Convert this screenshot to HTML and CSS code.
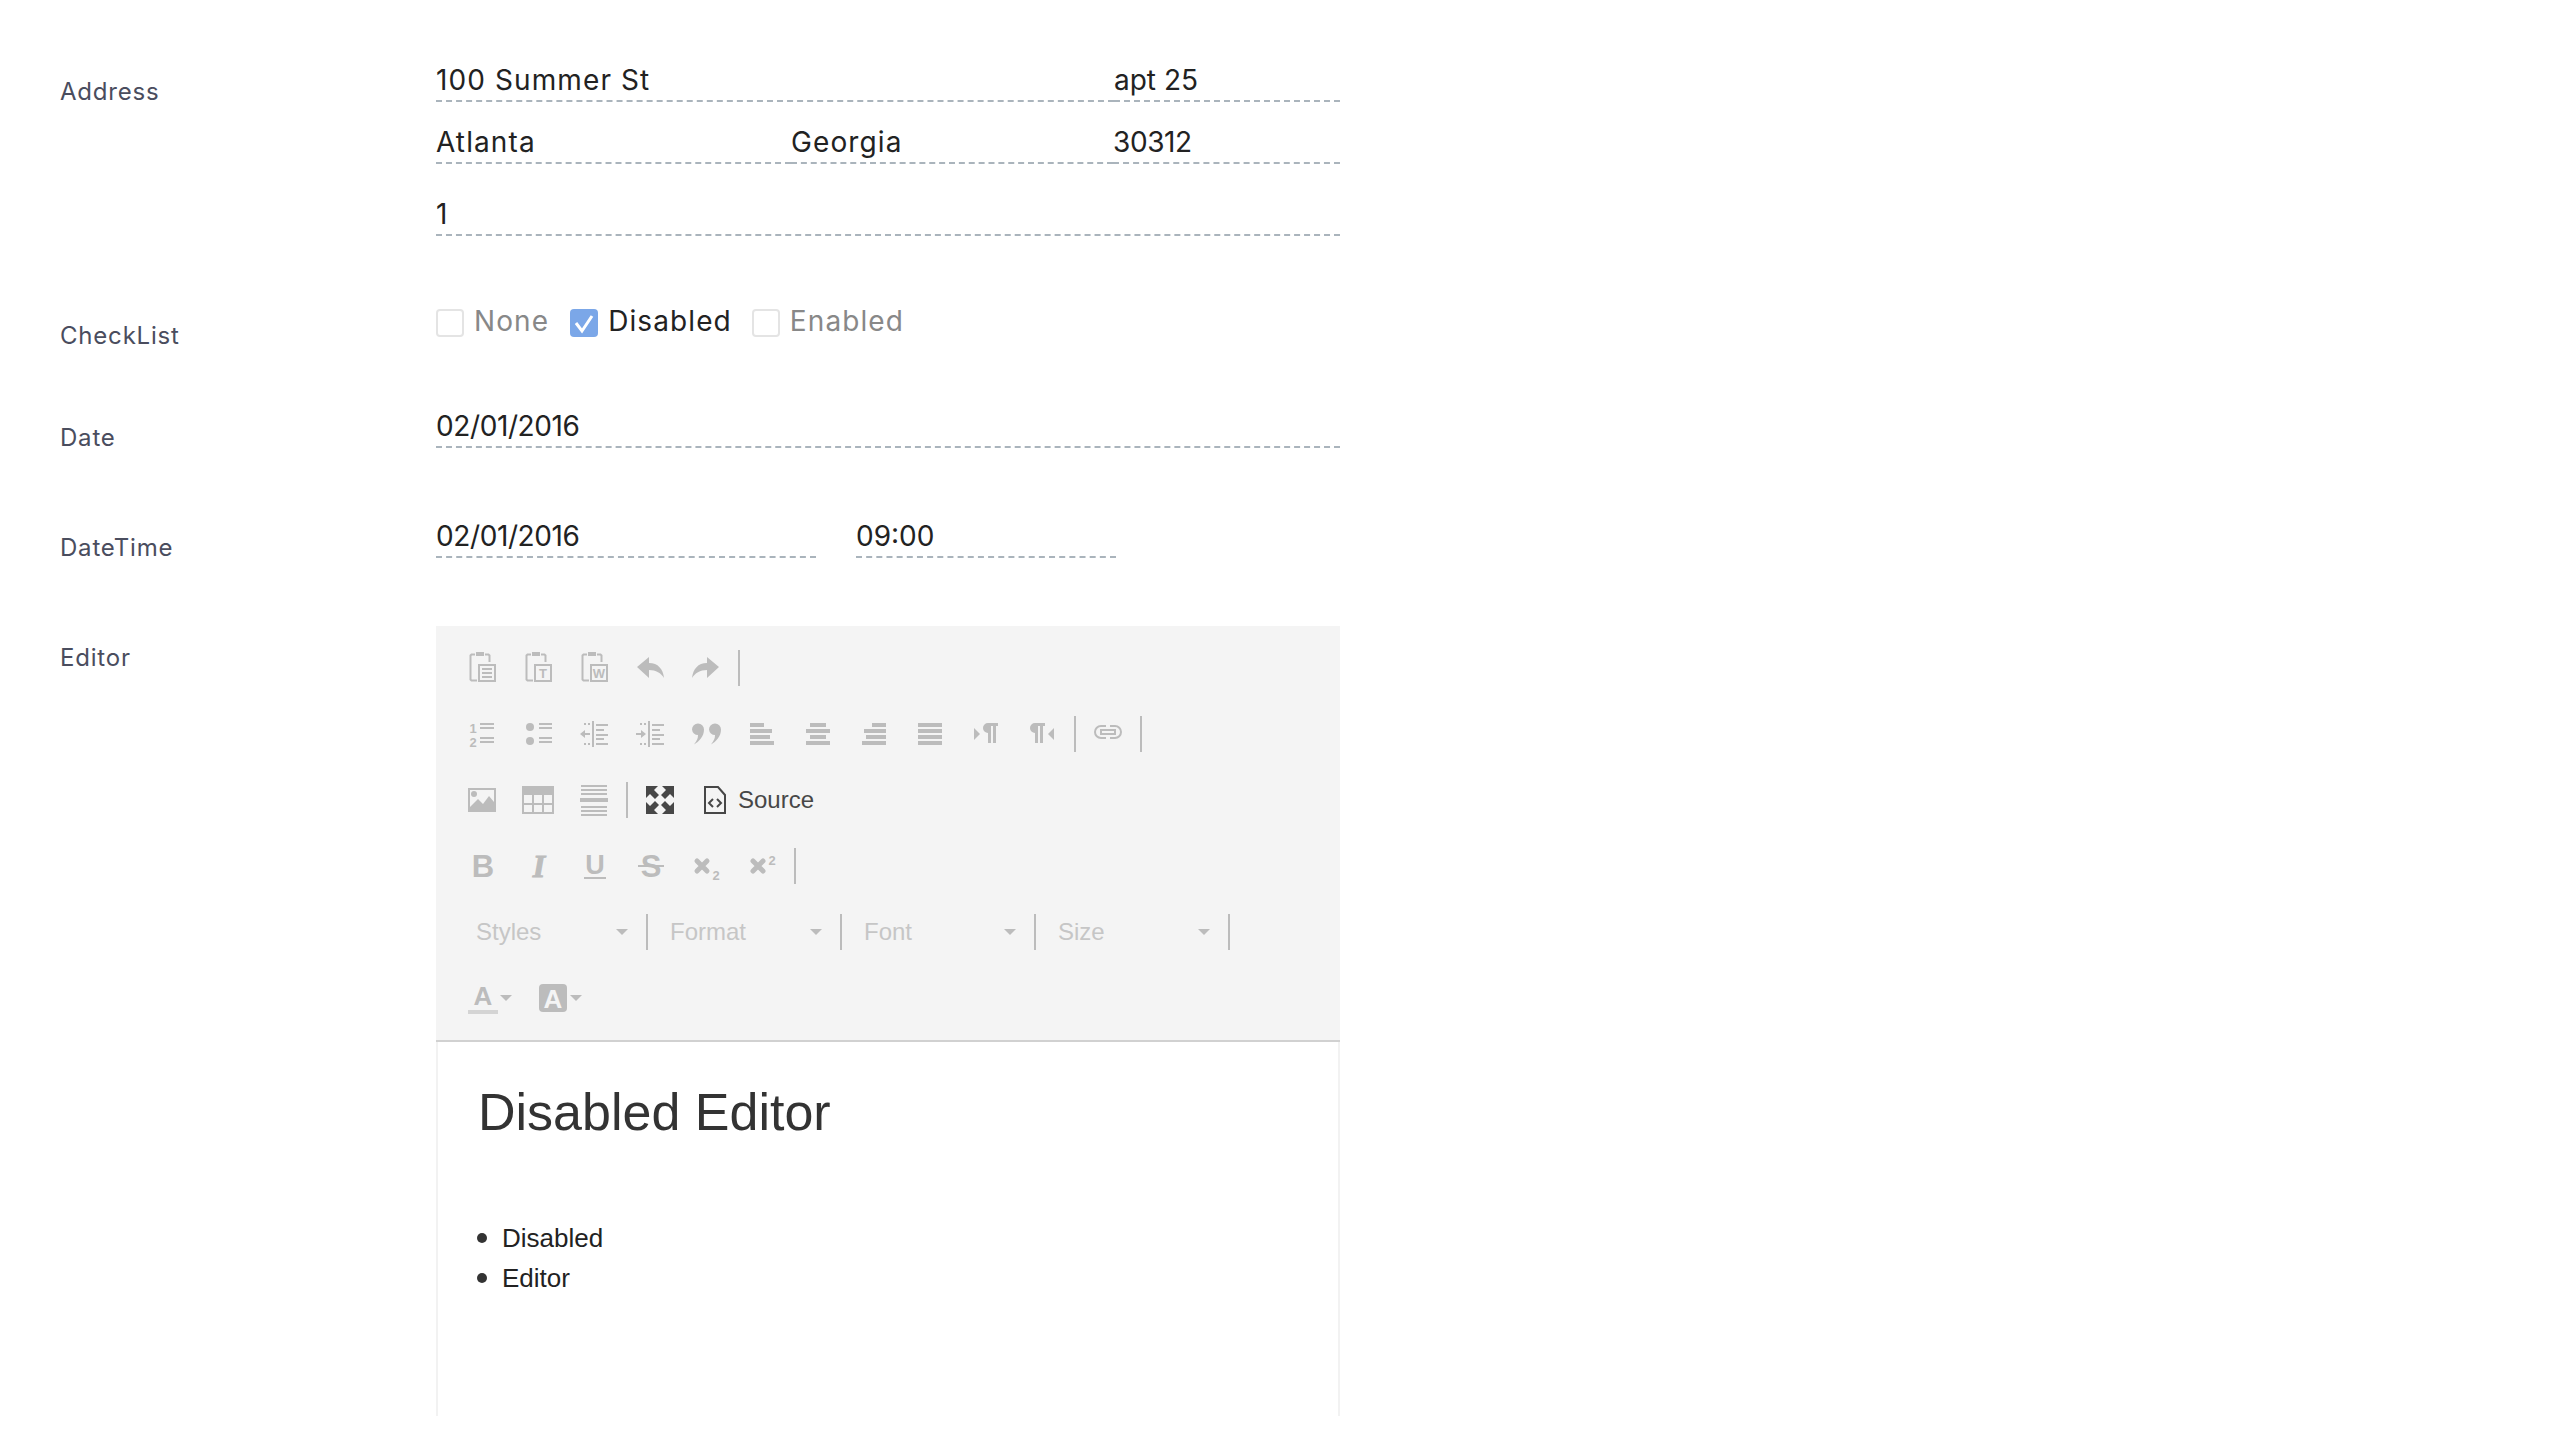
FILE: index.html
```html
<!DOCTYPE html>
<html>
  <head>
    <meta charset="UTF-8" />
    <title>Disabled Form</title>
    <link rel="stylesheet" href="styles.css">
  </head>
  <body>
    <form class="form">
      <div class="row row-address">
        <div class="row-label">Address</div>
        <div class="row-fields">
          <div class="field-line line-1">
            <div class="field word grow">100 Summer St</div>
            <div class="field apt">apt 25</div>
          </div>
          <div class="field-line line-2">
            <div class="field word city">Atlanta</div>
            <div class="field word state">Georgia</div>
            <div class="field num grow">30312</div>
          </div>
          <div class="field-line line-3">
            <div class="field grow">1</div>
          </div>
        </div>
      </div>

      <div class="row row-check">
        <div class="row-label">CheckList</div>
        <div class="row-fields checks">
          <span class="check-box"></span><span class="check-text off first">None</span>
          <span class="check-box on">
            <svg viewBox="0 0 28 28" width="28" height="28"><path d="M6 14l6 8L22 7" fill="none" stroke="#fff" stroke-width="3"/></svg>
          </span><span class="check-text">Disabled</span>
          <span class="check-box"></span><span class="check-text off">Enabled</span>
        </div>
      </div>

      <div class="row row-date">
        <div class="row-label">Date</div>
        <div class="row-fields">
          <div class="field-line"><div class="field num grow">02/01/2016</div></div>
        </div>
      </div>

      <div class="row row-datetime">
        <div class="row-label">DateTime</div>
        <div class="row-fields">
          <div class="field-line">
            <div class="field num date-part">02/01/2016</div>
            <div class="field time-part">09:00</div>
          </div>
        </div>
      </div>

      <div class="row row-editor">
        <div class="row-label">Editor</div>
        <div class="row-fields">
          <div class="editor">
            <div class="toolbar">

              <!-- clipboard, undo -->
              <div class="tool-row">
                <span class="btn"><svg class="ic" viewBox="0 0 32 32">
                  <path class="ln" d="M8 2.500H4.500l-1 1v24l1 1H10M18 2.500h3.500l1 1V10"/><rect x="9" y="0" width="8" height="4"/>
                  <rect class="ln" x="12" y="13" width="16" height="16"/><path class="ln" d="M15 17h10M15 21h10M15 25h10"/>
                </svg></span>
                <span class="btn"><svg class="ic" viewBox="0 0 32 32">
                  <path class="ln" d="M8 2.500H4.500l-1 1v24l1 1H10M18 2.500h3.500l1 1V10"/><rect x="9" y="0" width="8" height="4"/>
                  <rect class="ln" x="12" y="13" width="16" height="16"/><text class="tiny" x="20" y="26">T</text>
                </svg></span>
                <span class="btn"><svg class="ic" viewBox="0 0 32 32">
                  <path class="ln" d="M8 2.500H4.500l-1 1v24l1 1H10M18 2.500h3.500l1 1V10"/><rect x="9" y="0" width="8" height="4"/>
                  <rect class="ln" x="12" y="13" width="16" height="16"/><text class="tiny" x="20" y="26">W</text>
                </svg></span>
                <span class="btn"><svg class="ic" viewBox="0 0 32 32">
                  <path d="M2 15L14 5v6c9 0 14 6 15 15-3-5-8-8-15-8v8z"/>
                </svg></span>
                <span class="btn"><svg class="ic" viewBox="0 0 32 32">
                  <path d="M28 15L16 5v6C7 11 2 17 1 26c3-5 8-8 15-8v8z"/>
                </svg></span>
                <span class="sep"></span>
              </div>

              <!-- lists, blocks, align, bidi, link -->
              <div class="tool-row">
                <span class="btn"><svg class="ic" viewBox="0 0 32 32">
                  <text class="tiny" x="6" y="15">1</text><text class="tiny" x="6" y="29">2</text>
                  <path class="ln" d="M13 6h14M13 10h14M13 20h14M13 24h14"/>
                </svg></span>
                <span class="btn"><svg class="ic" viewBox="0 0 32 32">
                  <circle cx="7" cy="9" r="4"/><circle cx="7" cy="23" r="4"/>
                  <path class="ln" d="M16 6h13M16 10h13M16 20h13M16 24h13"/>
                </svg></span>
                <span class="btn"><svg class="ic" viewBox="0 0 32 32">
                  <rect x="13" y="3" width="2" height="26"/>
                  <path class="ln" d="M17 7h12M17 12h8M17 17h12M17 21h8M17 26h12"/>
                  <path d="M1 16l5-4v3h5v2H6v3z"/><path class="ln" d="M5 6h2M9 6h2M5 26h2M9 26h2"/>
                </svg></span>
                <span class="btn"><svg class="ic" viewBox="0 0 32 32">
                  <rect x="13" y="3" width="2" height="26"/>
                  <path class="ln" d="M17 7h12M17 12h8M17 17h12M17 21h8M17 26h12"/>
                  <path d="M11 16l-5-4v3H1v2h5v3z"/><path class="ln" d="M5 6h2M9 6h2M5 26h2M9 26h2"/>
                </svg></span>
                <span class="btn"><svg class="ic" viewBox="0 0 32 32">
                  <path d="M1 11.500a6 6 0 1 1 12 0c0 7-5 12-10 15 3-4 4-6 4-9.500a6 6 0 0 1-6-5.500z"/>
                  <path d="M18 11.500a6 6 0 1 1 12 0c0 7-5 12-10 15 3-4 4-6 4-9.500a6 6 0 0 1-6-5.500z"/>
                </svg></span>
                <span class="btn nudge"><svg class="ic" viewBox="0 0 32 32">
                  <rect x="4" y="5" width="14" height="4"/><rect x="4" y="11" width="22" height="4"/><rect x="4" y="17" width="20" height="4"/><rect x="4" y="23" width="24" height="4"/>
                </svg></span>
                <span class="btn nudge"><svg class="ic" viewBox="0 0 32 32">
                  <rect x="8" y="5" width="16" height="4"/><rect x="4" y="11" width="24" height="4"/><rect x="8" y="17" width="16" height="4"/><rect x="4" y="23" width="24" height="4"/>
                </svg></span>
                <span class="btn nudge"><svg class="ic" viewBox="0 0 32 32">
                  <rect x="14" y="5" width="14" height="4"/><rect x="6" y="11" width="22" height="4"/><rect x="8" y="17" width="20" height="4"/><rect x="4" y="23" width="24" height="4"/>
                </svg></span>
                <span class="btn nudge"><svg class="ic" viewBox="0 0 32 32">
                  <rect x="4" y="5" width="24" height="4"/><rect x="4" y="11" width="24" height="4"/><rect x="4" y="17" width="24" height="4"/><rect x="4" y="23" width="24" height="4"/>
                </svg></span>
                <span class="btn nudge"><svg class="ic" viewBox="0 0 32 32">
                  <path d="M4 10l6 6-6 6z"/><path d="M18 5h10v3h-2v17h-3V8h-2v17h-3V15a5 5 0 0 1 0-10z"/>
                </svg></span>
                <span class="btn nudge"><svg class="ic" viewBox="0 0 32 32">
                  <path d="M9 5h10v3h-2v17h-3V8h-2v17H9V15a5 5 0 0 1 0-10z"/><path d="M28 10l-6 6 6 6z"/>
                </svg></span>
                <span class="sep"></span>
                <span class="btn"><svg class="ic" viewBox="0 0 32 32">
                  <path class="ln" d="M14 8H9a6 6 0 0 0 0 12h5M18 8h5a6 6 0 0 1 0 12h-5"/><path class="ln" d="M9 12h14v4H9z"/>
                </svg></span>
                <span class="sep sep-last"></span>
              </div>

              <!-- insert, maximize, source -->
              <div class="tool-row">
                <span class="btn"><svg class="ic" viewBox="0 0 32 32">
                  <rect class="ln" x="2" y="5" width="26" height="22"/><circle cx="7" cy="10" r="3"/>
                  <path d="M3 26v-3l8-8 5 5 6-8 5 6v8z"/>
                </svg></span>
                <span class="btn"><svg class="ic" viewBox="0 0 32 32">
                  <rect class="ln" x="0" y="3" width="30" height="26"/><rect x="0" y="2" width="30" height="9"/>
                  <path class="ln" d="M10 11v18M20 11v18M0 20h30"/>
                </svg></span>
                <span class="btn"><svg class="ic" viewBox="0 0 32 32">
                  <path class="ln" d="M2 2h26M2 6h26M2 10h26M2 23h26M2 27h26M2 31h26"/><rect x="1" y="14" width="28" height="4"/>
                </svg></span>
                <span class="sep"></span>
                <span class="btn"><svg class="ic dark" viewBox="0 0 32 32">
                  <path d="M2 2h12l-4 4 5 5-4 4-5-5-4 4z"/>
                  <path d="M30 2H18l4 4-5 5 4 4 5-5 4 4z"/>
                  <path d="M2 30h12l-4-4 5-5-4-4-5 5-4-4z"/>
                  <path d="M30 30H18l4-4-5-5 4-4 5 5 4-4z"/>
                </svg></span>
                <span class="source">
                  <svg class="ic dark" viewBox="0 0 32 32">
                    <path class="ln" d="M6 3h13l7 8v18H6z"/><path class="ln" d="M14 15l-4 4 4 4M18 15l4 4-4 4"/>
                  </svg>
                  <span class="source-text">Source</span>
                </span>
              </div>

              <!-- basic styles -->
              <div class="tool-row">
                <span class="btn"><svg class="ic" viewBox="0 0 32 32"><text class="big" x="16" y="27">B</text></svg></span>
                <span class="btn"><svg class="ic" viewBox="0 0 32 32"><text class="big serif" x="16" y="27">I</text></svg></span>
                <span class="btn"><svg class="ic" viewBox="0 0 32 32"><text class="mid" x="16" y="24">U</text><rect x="5" y="27" width="22" height="2"/></svg></span>
                <span class="btn"><svg class="ic" viewBox="0 0 32 32"><text class="big" x="16" y="27">S</text><rect x="3" y="15" width="26" height="2"/></svg></span>
                <span class="btn"><svg class="ic" viewBox="0 0 32 32">
                  <path d="M6 11l10 10M16 11L6 21" fill="none" stroke="#bcbcbc" stroke-width="5" stroke-linecap="round"/><text class="tiny" x="25" y="30">2</text>
                </svg></span>
                <span class="btn"><svg class="ic" viewBox="0 0 32 32">
                  <path d="M6 11l10 10M16 11L6 21" fill="none" stroke="#bcbcbc" stroke-width="5" stroke-linecap="round"/><text class="tiny" x="25" y="15">2</text>
                </svg></span>
                <span class="sep"></span>
              </div>

              <!-- combos -->
              <div class="tool-row combos">
                <span class="combo"><span class="combo-text">Styles</span><span class="arrow"></span></span>
                <span class="sep sep-combo"></span>
                <span class="combo"><span class="combo-text">Format</span><span class="arrow"></span></span>
                <span class="sep sep-combo"></span>
                <span class="combo"><span class="combo-text">Font</span><span class="arrow"></span></span>
                <span class="sep sep-combo"></span>
                <span class="combo"><span class="combo-text">Size</span><span class="arrow"></span></span>
                <span class="sep sep-combo"></span>
              </div>

              <!-- colors -->
              <div class="tool-row">
                <span class="color-btn"><svg class="ic" viewBox="0 0 32 32">
                  <text class="color-a" x="16" y="23">A</text><rect x="1" y="28" width="30" height="4" fill="#d4d4d4"/>
                </svg><span class="arrow"></span></span>
                <span class="color-btn"><svg class="ic" viewBox="0 0 32 32">
                  <rect x="2" y="2" width="28" height="28" rx="4"/><text class="color-a inv" x="16" y="26">A</text>
                </svg><span class="arrow"></span></span>
              </div>
            </div>

            <div class="editor-body">
              <h1>Disabled Editor</h1>
              <ul>
                <li>Disabled</li>
                <li>Editor</li>
              </ul>
            </div>
          </div>
        </div>
      </div>
    </form>
  </body>
</html>
```

FILE: styles.css
```css
* {
  box-sizing: border-box;
}
body {
  margin: 0;
  background: #fff;
  font-family: "Inter", "Open Sans", sans-serif;
  overflow: hidden;
}
.form {
  padding: 62px 0 0 60px;
}
.row {
  display: flex;
}
.row-label {
  width: 376px;
  height: 40px;
  flex: none;
  color: #4a4d5e;
  font-size: 24px;
  letter-spacing: 0.8px;
  line-height: 30px;
  padding-top: 15px;
}
.row-fields {
  width: 904px;
  flex: none;
}

/* ---- text fields ---- */
.field-line {
  display: flex;
}
.line-2 {
  margin-top: 22px;
}
.line-3 {
  margin-top: 32px;
}
.field {
  height: 40px;
  line-height: 36px;
  font-size: 28px;
  color: #222;
  border-bottom: 2px dashed #aab4bc;
}
.word {
  letter-spacing: 1.1px;
}
.num {
  letter-spacing: -0.4px;
}
.grow {
  flex: 1;
}
.apt {
  width: 226px;
}
.city {
  width: 355px;
}
.state {
  width: 322px;
}
.date-part {
  width: 380px;
  margin-right: 40px;
}
.time-part {
  width: 260px;
}

/* ---- checklist ---- */
.row-check {
  margin-top: 73px;
  height: 28px;
}
.row-check .row-label {
  padding-top: 12px;
}
.checks {
  display: flex;
  align-items: center;
}
.check-box {
  width: 28px;
  height: 28px;
  border: 2px solid #e4e4e4;
  border-radius: 4px;
  flex: none;
}
.check-box.on {
  background: #7ba7e8;
  border: none;
}
.check-box svg {
  display: block;
}
.check-text {
  font-size: 28px;
  letter-spacing: 1.1px;
  line-height: 28px;
  color: #222;
  margin: -4px 20px 0 10px;
}
.check-text.off {
  color: #888;
}
.check-text.first {
  margin-right: 21px;
}

.row-date {
  margin-top: 71px;
}
.row-datetime {
  margin-top: 70px;
}
.row-editor {
  margin-top: 68px;
}
.row-editor .row-label {
  padding-top: 17px;
}

/* ---- editor toolbar ---- */
.editor {
  width: 904px;
}
.toolbar {
  background: #f4f4f4;
  border-bottom: 2px solid #d1d1d1;
  padding: 24px 0 24px 19px;
  display: flex;
  flex-direction: column;
  gap: 30px;
}
.tool-row {
  display: flex;
  align-items: center;
  height: 36px;
}
.btn {
  width: 56px;
  height: 32px;
  display: flex;
  justify-content: center;
  flex: none;
}
.nudge {
  padding-right: 2px;
}
.sep {
  width: 2px;
  height: 36px;
  margin: 0 4px 0 3px;
  background: #bcbcbc;
  flex: none;
}
.sep-last {
  margin-left: 4px;
}
.ic {
  width: 32px;
  height: 32px;
  display: block;
  flex: none;
  overflow: visible;
  fill: #bcbcbc;
}
.ic.dark {
  fill: #474747;
}
.ic .ln {
  fill: none;
  stroke: #bcbcbc;
  stroke-width: 2;
}
.ic.dark .ln {
  stroke: #474747;
}
.ic text {
  font-family: "Liberation Sans", sans-serif;
  text-anchor: middle;
}
.ic .tiny {
  font-size: 13px;
  font-weight: 700;
}
.ic .big {
  font-size: 31px;
  font-weight: 700;
}
.ic .big.serif {
  font-family: "Liberation Serif", serif;
  font-style: italic;
  font-size: 32px;
  stroke: #bcbcbc;
}
.ic .mid {
  font-size: 27px;
  font-weight: 700;
}
.ic .color-a {
  font-size: 26px;
  font-weight: 700;
}
.ic .color-a.inv {
  fill: #f4f4f4;
}
.source {
  display: flex;
  align-items: center;
  margin-left: 11px;
  gap: 7px;
}
.source-text {
  font-family: "Liberation Sans", sans-serif;
  font-size: 24px;
  color: #474747;
}
.combos {
  margin-left: 1px;
}
.combo {
  width: 186px;
  height: 36px;
  padding: 0 14px 0 20px;
  display: flex;
  align-items: center;
  justify-content: space-between;
  flex: none;
}
.combo-text {
  font-family: "Liberation Sans", sans-serif;
  font-size: 24px;
  color: #c6c6c6;
}
.sep-combo {
  margin: 0 2px 0 4px;
}
.arrow {
  width: 0;
  height: 0;
  border-left: 6px solid transparent;
  border-right: 6px solid transparent;
  border-top: 6px solid #bcbcbc;
  flex: none;
}
.color-btn {
  width: 70px;
  padding-left: 12px;
  display: flex;
  align-items: center;
  gap: 1px;
  flex: none;
}

/* ---- editor content ---- */
.editor-body {
  height: 374px;
  border-left: 2px solid #f2f2f2;
  border-right: 2px solid #f2f2f2;
  padding: 1px 40px 0;
  font-family: "Liberation Sans", sans-serif;
  color: #333;
}
.editor-body h1 {
  font-size: 52px;
  font-weight: 400;
  line-height: 62px;
  margin: 38px 0 0;
}
.editor-body ul {
  margin: 75px 0 0;
  padding: 0;
  list-style: none;
  font-size: 26px;
  line-height: 40px;
  color: #222;
}
.editor-body li {
  display: flex;
  align-items: center;
}
.editor-body li::before {
  content: "";
  width: 10px;
  height: 10px;
  margin: 0 15px 0 -1px;
  border-radius: 50%;
  background: #333;
}
```
